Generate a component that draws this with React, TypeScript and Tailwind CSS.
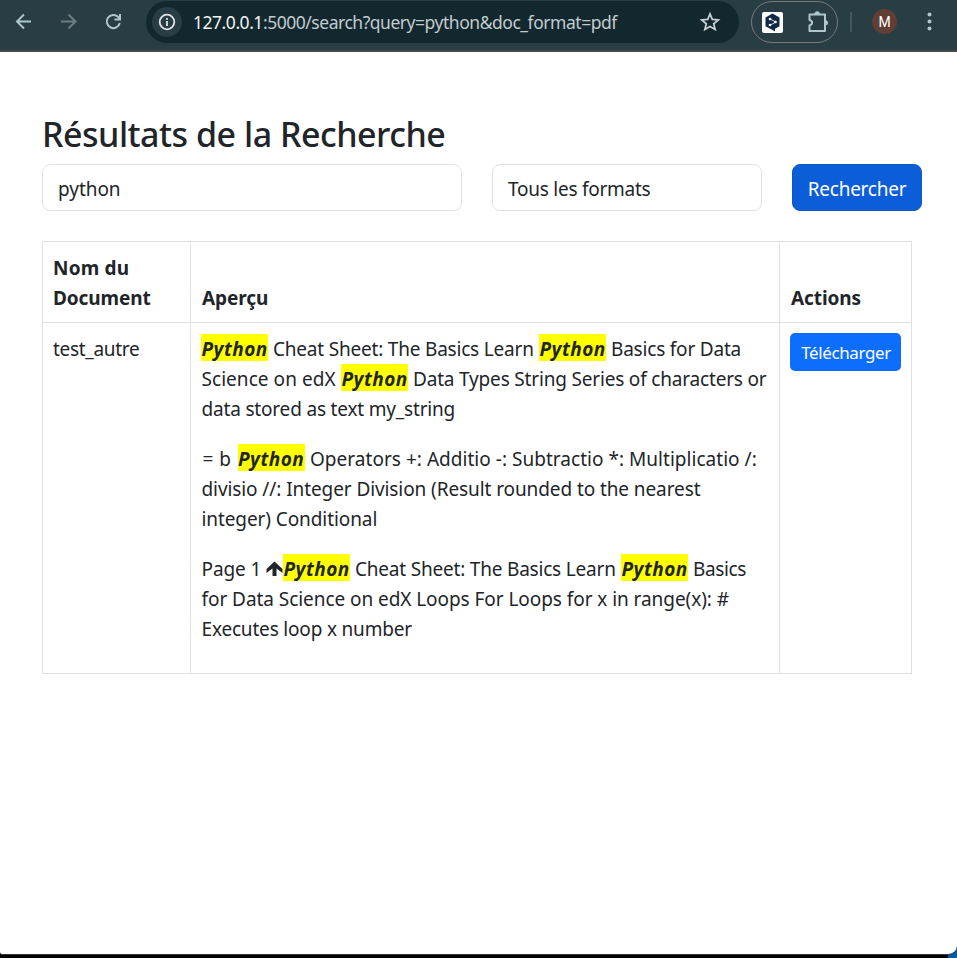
import type { ReactNode } from "react";

function Mark() {
  return (
    <mark className="-mt-[3px] block h-[27px] w-[67px] shrink-0 bg-[#ffff00] pl-[0.5px] text-[19px] leading-[31px] font-bold tracking-[0.5px] text-[#212529] italic">
      Python
    </mark>
  );
}

function Line({ children, className = "" }: { children: ReactNode; className?: string }) {
  return <span className={"flex h-[30px] items-center " + className}>{children}</span>;
}

function Toolbar() {
  return (
    <header className="flex h-[52px] items-start border-b-2 border-[#474747] bg-[#293e44]">
      <nav className="flex h-11 w-[146px] shrink-0 items-center pl-3">
        <svg width="24" height="24" viewBox="0 0 24 24" fill="none" stroke="#adc9ce" strokeWidth="1.9">
          <path d="M19 11.5H5M12 4.5l-7 7 7 7" />
        </svg>
        <svg className="ml-[21px]" width="24" height="24" viewBox="0 0 24 24" fill="none" stroke="#6d7e83" strokeWidth="1.9">
          <path d="M4 11.5h14M11.5 4.5l7 7-7 7" />
        </svg>
        <svg className="ml-5" width="24" height="24" viewBox="0 0 24 24" fill="none" stroke="#adc9ce" strokeWidth="2">
          <path d="M18.8 13a6.600 6.600 0 1 1-1.700-6.100l2 2.300" />
          <path d="M19 4v5.600h-5.500" />
        </svg>
      </nav>
      <div className="mt-px flex h-[42px] w-[593px] shrink-0 items-center rounded-full bg-[#12282e] pl-[6px]">
        <span className="flex size-[30px] items-center justify-center rounded-full bg-[#293e44]">
          <svg width="18" height="18" viewBox="0 0 18 18" fill="none" stroke="#e0e4e5" strokeWidth="1.8">
            <circle cx="9" cy="9" r="7.300" />
            <path d="M9 8v5M9 5v1.800" />
          </svg>
        </span>
        <span className="ml-[11px] w-[505px] text-[17.5px] leading-[30px] tracking-[-0.47px] whitespace-nowrap text-[#c3cbce]">
          <span className="text-[#f1f4f4]">127.0.0.1</span>:5000/search?query=python&amp;doc_format=pdf
        </span>
        <svg className="ml-px shrink-0" width="22" height="22" viewBox="0 0 24 24" fill="none" stroke="#c8d0d2" strokeWidth="1.9">
          <path d="M12 3.200l2.500 6 6.500.5-5 4.200 1.600 6.300L12 16.800l-5.600 3.400L8 13.900 3 9.700l6.500-.5z" />
        </svg>
      </div>
      <div className="mt-px ml-3 flex h-[42px] w-[87px] shrink-0 items-center rounded-full border border-[#78797a] pl-[10px]">
        <svg width="21" height="21" viewBox="0 0 21 21">
          <rect width="21" height="21" rx="2" fill="#fff" />
          <path d="M10.500 1.500l7 4v8.700l-4.500 2.500v2.700l-3-1.700-6.500-3.500V5.500z" fill="#102947" />
          <path d="M8 7l6 3-6 3.200" fill="none" stroke="#c8d5df" strokeWidth="1" />
          <circle cx="8" cy="7" r="1.300" fill="#fff" />
          <circle cx="13.500" cy="10" r="1.300" fill="#fff" />
          <circle cx="8" cy="13" r="1.300" fill="#fff" />
        </svg>
        <svg className="ml-[23px]" width="24" height="24" viewBox="0 0 24 24">
          <path d="M3.500 4.500h15.500v16.500H3.500v-5.500c3.500-1 3.500-4.500 0-5.500z" fill="none" stroke="#adc9ce" strokeWidth="2" strokeLinejoin="round" />
          <path d="M8.500 4a2.700 2.700 0 0 1 5.400 0M19.500 10.300a2.500 2.500 0 0 1 0 5" fill="#adc9ce" />
        </svg>
      </div>
      <span className="mt-3 ml-3 h-5 w-[2px] shrink-0 rounded bg-[#405960]" />
      <span className="mt-[9px] ml-5 flex size-[25px] shrink-0 items-center justify-center rounded-full bg-[#613f35] pt-px font-['Roboto',sans-serif] text-[14px] text-white">M</span>
      <svg className="mt-[10px] ml-[26px] shrink-0" width="14" height="24" viewBox="0 0 14 24" fill="#adc9ce">
        <circle cx="6.500" cy="4.500" r="2" />
        <circle cx="6.500" cy="11.500" r="2" />
        <circle cx="6.500" cy="18.500" r="2" />
      </svg>
    </header>
  );
}

export default function App() {
  return (
    <div className="h-[958px] w-[957px] overflow-hidden bg-[linear-gradient(90deg,#000_948px,#005aa5_948px)] font-['Noto_Sans',sans-serif] text-[19px] text-[#212529]">
      <div className="h-[955px] overflow-hidden rounded-br-[9px] rounded-bl-[3px] border-b border-[#333] bg-white">
        <Toolbar />
        <main className="px-[42px] pt-[58px]">
          <h1 className="h-[54px] text-[34px] leading-[48px] font-medium tracking-[-0.49px] whitespace-nowrap">Résultats de la Recherche</h1>
          <form className="flex w-[880px] gap-[30px] tracking-[-0.2px]">
            <div className="flex h-[47px] w-[420px] items-center rounded-lg border border-[#dee2e6] px-[15px] pt-[3px] tracking-[-0.05px]">python</div>
            <div className="flex h-[47px] w-[270px] items-center rounded-lg border border-[#dee2e6] px-[15px] pt-[3px] tracking-[-0.25px]">Tous les formats</div>
            <button type="button" className="h-[47px] w-[130px] rounded-lg border border-[#0a58ca] bg-[#0b5ed7] pt-[3px] tracking-[-0.25px] whitespace-nowrap text-white">Rechercher</button>
          </form>
          <table className="mt-[30px] w-[870px] table-fixed border-collapse text-left leading-[30px] tracking-[-0.2px]">
            <colgroup>
              <col className="w-[148px]" />
              <col className="w-[589px]" />
              <col className="w-[132px]" />
            </colgroup>
            <thead>
              <tr className="h-[81px] align-bottom tracking-[-0.1px]">
                <th className="border border-[#dee2e6] px-[10px] pt-[11px] pb-[9px]"><span className="tracking-[0.2px]">Nom du</span><br />Document</th>
                <th className="border border-[#dee2e6] px-[11px] pt-[11px] pb-[9px]">Aperçu</th>
                <th className="border border-[#dee2e6] px-[11px] pt-[11px] pb-[9px]">Actions</th>
              </tr>
            </thead>
            <tbody>
              <tr className="h-[351px] align-top">
                <td className="border border-[#dee2e6] px-[10px] pt-[11px] tracking-[-0.3px]">test_autre</td>
                <td className="border border-[#dee2e6] pt-[11px] pl-[10.5px] whitespace-nowrap">
                  <p className="mb-5">
                    <Line className="-ml-[0.5px]"><Mark /><span className="w-[271px] shrink-0 pl-[5px]">Cheat Sheet: The Basics Learn</span><Mark /><span className="pl-[5px]">Basics for Data</span></Line>
                    <Line><span className="w-[139.5px] shrink-0 tracking-[0.05px]">Science on edX</span><Mark /><span className="pl-[5px] tracking-[-0.18px]">Data Types String Series of characters or</span></Line>
                    <Line className="tracking-[-0.18px]">data stored as text my_string</Line>
                  </p>
                  <p className="mb-5">
                    <Line><span className="w-[36px] shrink-0 pl-px tracking-[0.5px]">= b</span><Mark /><span className="pl-[5.5px] tracking-[0.03px]">Operators +: Additio -: Subtractio *: Multiplicatio /:</span></Line>
                    <Line className="tracking-[-0.09px]">divisio //: Integer Division (Result rounded to the nearest</Line>
                    <Line className="tracking-[-0.09px]">integer) Conditional</Line>
                  </p>
                  <p>
                    <Line>
                      <span className="w-[64px] shrink-0 tracking-[-0.1px]">Page 1</span>
                      <svg className="mr-[0.5px] shrink-0" width="17" height="16" viewBox="0 0 17 16" fill="#212529"><path d="M8.500.5L16.500 8v4L10.500 7.500V15h-4V7.500L.5 12V8z" /></svg>
                      <Mark />
                      <span className="w-[271px] shrink-0 pl-[5px]">Cheat Sheet: The Basics Learn</span>
                      <Mark />
                      <span className="pl-[5px] tracking-[-0.4px]">Basics</span>
                    </Line>
                    <Line className="tracking-[-0.06px]">for Data Science on edX Loops For Loops for x in range(x): #</Line>
                    <Line className="tracking-[-0.18px]">Executes loop x number</Line>
                  </p>
                </td>
                <td className="border border-[#dee2e6] p-[10px]">
                  <button type="button" className="block h-[38px] w-[111px] rounded-[5px] bg-[#0d6efd] pt-px pl-px text-[17px] tracking-[-0.4px] whitespace-nowrap text-white">Télécharger</button>
                </td>
              </tr>
            </tbody>
          </table>
        </main>
      </div>
    </div>
  );
}
